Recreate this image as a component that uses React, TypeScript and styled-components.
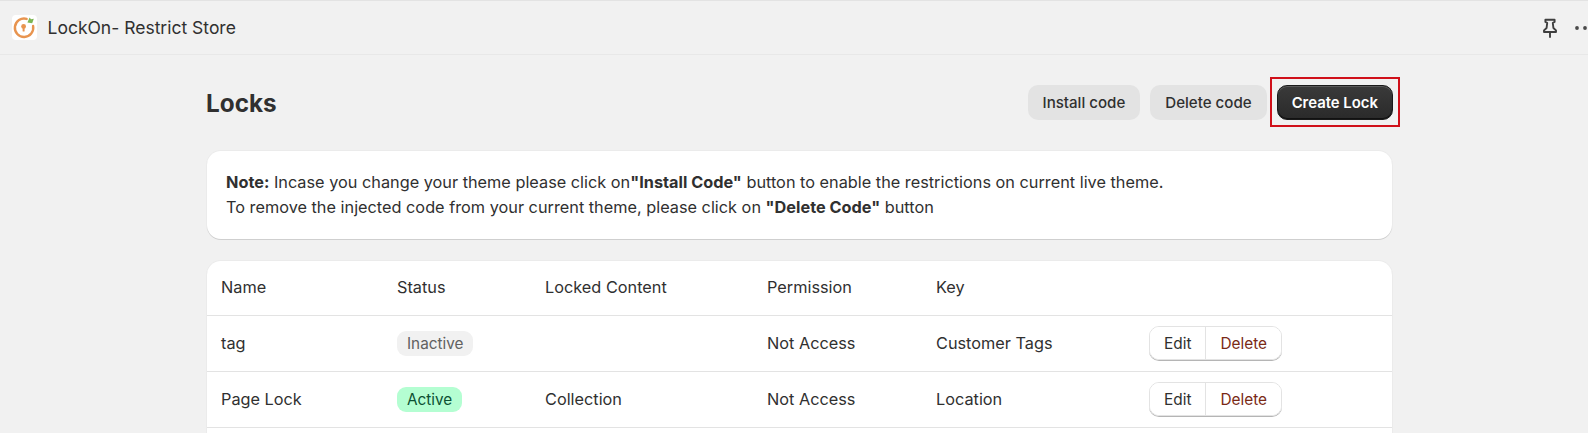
import React, { FC } from "react";
import styled, { createGlobalStyle } from "styled-components";

const GlobalStyle = createGlobalStyle`
  html, body {
    margin: 0;
    padding: 0;
    background: #f1f1f1;
    font-family: Inter, "Noto Sans", sans-serif;
    color: #303030;
  }
`;

const Shell = styled.div`
  height: 433px;
  overflow: hidden;
`;

const TopBar = styled.header`
  height: 53px;
  display: flex;
  align-items: center;
  justify-content: space-between;
  padding-left: 12px;
  border-top: 1px solid #e3e3e3;
  border-bottom: 1px solid #e8e8e8;
`;

const AppName = styled.div`
  display: flex;
  align-items: center;
  gap: 10.5px;
  font-size: 17.5px;
  color: #303030;
`;

const BarActions = styled.div`
  display: flex;
  align-items: center;
  gap: 13px;
  margin-right: -9px;
`;

const Page = styled.main`
  margin: 0 196px 0 207px;
  padding-top: 30px;
`;

const PageHeader = styled.div`
  display: flex;
  align-items: center;
  justify-content: space-between;
  height: 35px;
  margin-bottom: 31px;
`;

const Title = styled.h1`
  margin: 0 0 0 -1px;
  font-size: 24.3px;
  font-weight: 700;
  color: #303030;
`;

const ButtonRow = styled.div`
  display: flex;
  gap: 10px;
  margin-right: -1px;
`;

const GhostButton = styled.button`
  height: 35px;
  padding: 0 15px;
  border: 0;
  border-radius: 10px;
  background: #e3e3e3;
  color: #303030;
  font: 500 15.1px Inter, sans-serif;
`;

const PrimaryButton = styled.button`
  position: relative;
  height: 35px;
  padding: 0 14px;
  border: 1px solid #1a1a1a;
  border-radius: 10px;
  background: linear-gradient(#3a3a3a, #2a2a2a);
  box-shadow: inset 0 1px 0 #5a5a5a, inset 0 -1px 0 #111;
  color: #fff;
  font: 600 14.9px Inter, sans-serif;

  /* red highlight box drawn over the screenshot */
  &::after {
    content: "";
    position: absolute;
    inset: -9px -8px -8px -8px;
    border: 2px solid #d0101a;
  }
`;

const Card = styled.section`
  background: #fff;
  border-radius: 14px;
  box-shadow: 0 1px 0 #cfcfcf, 0 0 0 1px #ebebeb;
  overflow: hidden;
`;

const NoteCard = styled(Card)`
  padding: 19px;
  margin-bottom: 22px;
  font-size: 16.3px;
  line-height: 25px;
  color: #303030;
  b {
    font-weight: 700;
  }
`;

const Table = styled.table`
  width: 100%;
  border-collapse: collapse;
  table-layout: fixed;
  font-size: 16.3px;
  color: #303030;
`;

const HeadCell = styled.th<{ $width?: number }>`
  width: ${(p) => (p.$width ? `${p.$width}px` : "auto")};
  height: 54px;
  padding: 0 0 2px 14px;
  text-align: left;
  font-weight: 400;
  box-sizing: border-box;
`;

const Row = styled.tr`
  border-top: 1px solid #e3e3e3;
`;

const Cell = styled.td`
  height: 56px;
  padding: 0 0 0 14px;
  box-sizing: border-box;
`;

const Badge = styled.span<{ $active?: boolean }>`
  display: inline-block;
  height: 25px;
  line-height: 25px;
  padding: 0 10px;
  border-radius: 9px;
  font-size: 15.3px;
  background: ${(p) => (p.$active ? "#b4fed2" : "#f1f1f1")};
  color: ${(p) => (p.$active ? "#0c5132" : "#616161")};
`;

const ButtonGroup = styled.div`
  display: inline-flex;
  height: 34px;
  box-sizing: border-box;
  border: 1px solid #e3e3e3;
  border-radius: 10px;
  box-shadow: 0 1px 0 #b5b5b5;
  vertical-align: middle;
  overflow: hidden;
`;

const GroupButton = styled.button<{ $danger?: boolean }>`
  border: 0;
  background: #fff;
  padding: 0 14px;
  font: 400 15.4px Inter, sans-serif;
  color: ${(p) => (p.$danger ? "#7a2a16" : "#303030")};
  & + & {
    border-left: 1px solid #e3e3e3;
  }
`;

const LogoIcon: FC = () => (
  <svg width="25" height="25" viewBox="0 0 25 25">
    <rect width="25" height="25" rx="4" fill="#fff" />
    <path d="M14.6 3.9A9.2 9.2 0 1 0 21.1 11" fill="none" stroke="#e8944f" strokeWidth="2.4" strokeLinecap="round" />
    <circle cx="11.6" cy="11.4" r="2.4" fill="#e8944f" />
    <rect x="10.6" y="12" width="2" height="4.6" rx="0.6" fill="#e8944f" />
    <path d="M15.4 7.6 17.6 2.4l1.4 1.8 2.8-.4-1.6 4.4z" fill="#7cb653" />
  </svg>
);

const PinIcon: FC = () => (
  <svg width="20" height="20" viewBox="0 0 20 20" fill="none" stroke="#3f3f3f" strokeWidth="1.9" strokeLinejoin="round">
    <path d="M5.4 1.8h9.2v2.2l-1.8.8.6 5.2 2.6 2.4v1.6H4v-1.6l2.6-2.4.6-5.2-1.8-.8z" />
    <path d="M10 14v5" strokeLinecap="round" />
  </svg>
);

const DotsIcon: FC = () => (
  <svg width="24" height="20" viewBox="0 0 24 20" fill="#4a4a4a">
    <circle cx="4" cy="10" r="1.9" />
    <circle cx="12" cy="10" r="1.9" />
    <circle cx="20" cy="10" r="1.9" />
  </svg>
);

const locks = [
  { name: "tag", active: false, content: "", permission: "Not Access", key: "Customer Tags" },
  { name: "Page Lock", active: true, content: "Collection", permission: "Not Access", key: "Location" },
];

const App: FC = () => (
  <Shell>
    <GlobalStyle />
    <TopBar>
      <AppName>
        <LogoIcon />
        LockOn- Restrict Store
      </AppName>
      <BarActions>
        <PinIcon />
        <DotsIcon />
      </BarActions>
    </TopBar>
    <Page>
      <PageHeader>
        <Title>Locks</Title>
        <ButtonRow>
          <GhostButton>Install code</GhostButton>
          <GhostButton>Delete code</GhostButton>
          <PrimaryButton>Create Lock</PrimaryButton>
        </ButtonRow>
      </PageHeader>
      <NoteCard>
        <b>Note:</b> Incase you change your theme please click on<b>"Install Code"</b> button to enable the restrictions on current live theme.
        <br />
        To remove the injected code from your current theme, please click on <b>"Delete Code"</b> button
      </NoteCard>
      <Card>
        <Table>
          <thead>
            <tr>
              <HeadCell $width={176}>Name</HeadCell>
              <HeadCell $width={148}>Status</HeadCell>
              <HeadCell $width={222}>Locked Content</HeadCell>
              <HeadCell $width={169}>Permission</HeadCell>
              <HeadCell $width={213}>Key</HeadCell>
              <HeadCell />
            </tr>
          </thead>
          <tbody>
            {locks.map((lock) => (
              <Row key={lock.name}>
                <Cell>{lock.name}</Cell>
                <Cell>
                  <Badge $active={lock.active}>{lock.active ? "Active" : "Inactive"}</Badge>
                </Cell>
                <Cell>{lock.content}</Cell>
                <Cell>{lock.permission}</Cell>
                <Cell>{lock.key}</Cell>
                <Cell>
                  <ButtonGroup>
                    <GroupButton>Edit</GroupButton>
                    <GroupButton $danger>Delete</GroupButton>
                  </ButtonGroup>
                </Cell>
              </Row>
            ))}
            <Row>
              <Cell colSpan={6} />
            </Row>
          </tbody>
        </Table>
      </Card>
    </Page>
  </Shell>
);

export default App;
